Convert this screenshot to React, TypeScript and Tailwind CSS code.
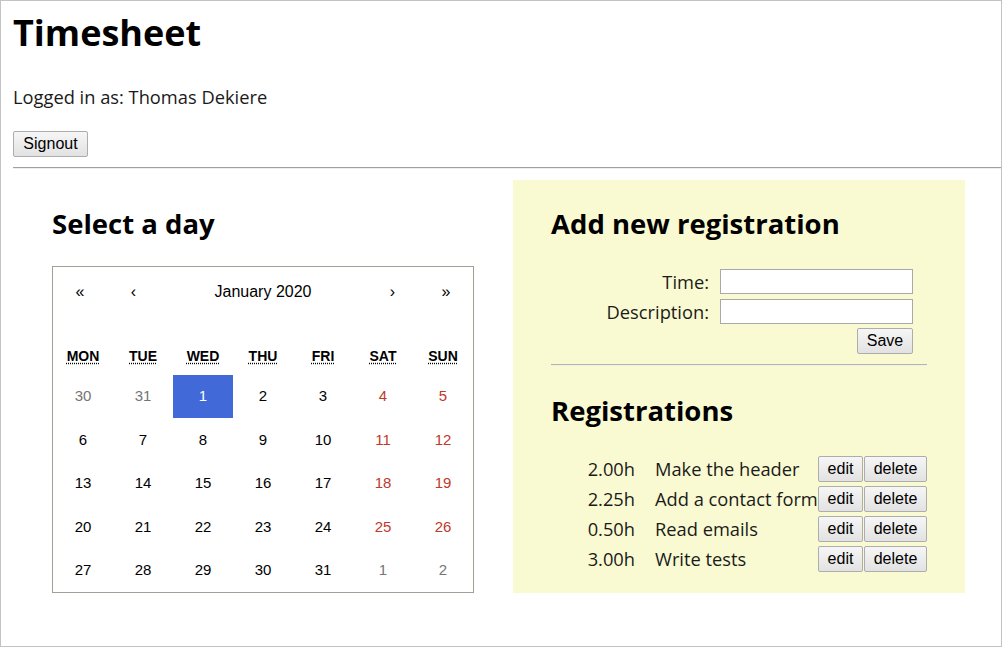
import React from 'react';

type Day = { n: number; kind: 'normal' | 'other' | 'weekend' | 'selected' };

const weeks: Day[][] = [
  [
    { n: 30, kind: 'other' },
    { n: 31, kind: 'other' },
    { n: 1, kind: 'selected' },
    { n: 2, kind: 'normal' },
    { n: 3, kind: 'normal' },
    { n: 4, kind: 'weekend' },
    { n: 5, kind: 'weekend' },
  ],
  [6, 7, 8, 9, 10, 11, 12].map((n, i) => ({ n, kind: i > 4 ? 'weekend' : 'normal' } as Day)),
  [13, 14, 15, 16, 17, 18, 19].map((n, i) => ({ n, kind: i > 4 ? 'weekend' : 'normal' } as Day)),
  [20, 21, 22, 23, 24, 25, 26].map((n, i) => ({ n, kind: i > 4 ? 'weekend' : 'normal' } as Day)),
  [
    { n: 27, kind: 'normal' },
    { n: 28, kind: 'normal' },
    { n: 29, kind: 'normal' },
    { n: 30, kind: 'normal' },
    { n: 31, kind: 'normal' },
    { n: 1, kind: 'other' },
    { n: 2, kind: 'other' },
  ],
];

const weekdays = ['MON', 'TUE', 'WED', 'THU', 'FRI', 'SAT', 'SUN'];

const registrations = [
  { time: '2.00h', desc: 'Make the header' },
  { time: '2.25h', desc: 'Add a contact form' },
  { time: '0.50h', desc: 'Read emails' },
  { time: '3.00h', desc: 'Write tests' },
];

const btn =
  "border border-[#adadad] rounded-[2px] bg-gradient-to-b from-[#f6f6f6] to-[#e2e2e2] text-[16px] text-black font-['Liberation_Sans',Arial,sans-serif] leading-none";

const dayColor = {
  normal: 'text-black',
  other: 'text-[#757575]',
  weekend: 'text-[#c0392b]',
  selected: 'text-white bg-[#4169d8]',
};

// Calendar widget
const Calendar = () => {
  return (
    <div className="w-[422px] border border-[#a0a096] bg-white font-['Liberation_Sans',Arial,sans-serif]">
      {/* month navigation */}
      <div className="flex h-[50px] items-center text-[16px] text-black">
        <span className="w-[54px] text-center">«</span>
        <span className="w-[53px] text-center">‹</span>
        <span className="flex-1 text-center">January 2020</span>
        <span className="w-[53px] text-center">›</span>
        <span className="w-[54px] text-center">»</span>
      </div>

      {/* weekday names */}
      <div className="grid h-[58px] grid-cols-7 items-end pb-[8px] text-[14px] font-bold text-black">
        {weekdays.map((d) => (
          <abbr key={d} className="text-center underline decoration-dotted underline-offset-[2px]">
            {d}
          </abbr>
        ))}
      </div>

      {/* days */}
      <div className="grid h-[217px] grid-cols-7 grid-rows-5 text-[15px]">
        {weeks.flat().map((d, i) => (
          <div key={i} className={`flex items-center justify-center ${dayColor[d.kind]}`}>
            {d.n}
          </div>
        ))}
      </div>
    </div>
  );
};

export default function App() {
  return (
    <div className="h-[647px] w-[1002px] overflow-hidden border border-[#c3c3c3] bg-white font-['Open_Sans',sans-serif] text-[#1a1a1a]">
      {/* header */}
      <div className="pl-[12px] pt-[8px]">
        <h1 className="text-[36px] font-bold leading-[48px] text-black">Timesheet</h1>
        <p className="mt-[27px] text-[18.3px] leading-[26px]">Logged in as: Thomas Dekiere</p>
        <button className={`${btn} mt-[21px] h-[26px] w-[75px]`}>Signout</button>
        <div className="mt-[10px] h-[2px] border-t border-t-[#a0a0a0] border-b border-b-[#eeeeee]" />
      </div>

      <div className="mt-[11px] flex">
        {/* left column */}
        <div className="w-[512px] pl-[51px]">
          <h2 className="pt-[26px] text-[27.5px] font-bold leading-[36px] text-black">Select a day</h2>
          <div className="mt-[24px]">
            <Calendar />
          </div>
        </div>

        {/* right panel */}
        <div className="w-[452px] bg-[#fafad2] px-[38px] pb-[20px]">
          <h2 className="pt-[26px] text-[27.5px] font-bold leading-[36px] text-black">Add new registration</h2>

          <div className="mt-[27px] flex flex-col items-start">
            <div className="flex items-center">
              <label className="w-[158px] text-right text-[18.3px] leading-[25px]">Time:</label>
              <input className="ml-[11px] h-[25px] w-[193px] border border-[#a9a9a9] bg-white" />
            </div>
            <div className="mt-[5px] flex items-center">
              <label className="w-[158px] text-right text-[18.3px] leading-[25px]">Description:</label>
              <input className="ml-[11px] h-[25px] w-[193px] border border-[#a9a9a9] bg-white" />
            </div>
            <div className="mt-[4px] flex w-[362px] justify-end">
              <button className={`${btn} h-[26px] w-[56px]`}>Save</button>
            </div>
          </div>

          <div className="mt-[10px] h-[2px] border-t border-t-[#b4b4b4] border-b border-b-[#f2f2e2]" />

          <h2 className="pt-[27px] text-[27.5px] font-bold leading-[36px] text-black">Registrations</h2>

          <div className="mt-[27px] flex flex-col gap-[4px]">
            {registrations.map((r) => (
              <div key={r.desc} className="flex h-[26px] items-center text-[18.3px]">
                <span className="w-[84px] text-right">{r.time}</span>
                <span className="ml-[20px] w-[163px] whitespace-nowrap">{r.desc}</span>
                <button className={`${btn} h-[26px] w-[45px]`}>edit</button>
                <button className={`${btn} ml-[1px] h-[26px] w-[63px]`}>delete</button>
              </div>
            ))}
          </div>
        </div>
      </div>
    </div>
  );
}
